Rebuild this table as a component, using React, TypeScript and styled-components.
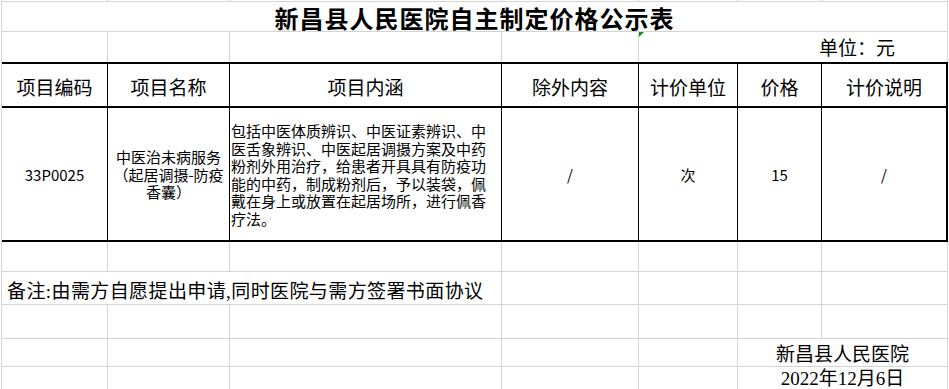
import styled, { createGlobalStyle } from "styled-components";

const GlobalStyle = createGlobalStyle`
  html, body {
    margin: 0;
    padding: 0;
    background: #fff;
  }
  body {
    font-family: "Noto Sans CJK SC", sans-serif;
    color: #000;
  }
`;

// column widths taken from the sheet (each includes its right grid line)
const COLS = "106px 122px 272px 137px 99px 84px 126px";
const GRID = "#d4d4d4";
const SERIF = `"Liberation Serif", "Noto Sans CJK SC", serif`;

const Sheet = styled.div`
  width: 946px;
  margin-left: 1px;
  border-left: 1px solid ${GRID};
`;

const Row = styled.div<{ $h: number }>`
  display: grid;
  grid-template-columns: ${COLS};
  height: ${(p) => p.$h}px;
`;

interface CellProps {
  $span?: number;
  $noBottom?: boolean;
}

const Cell = styled.div<CellProps>`
  grid-column: span ${(p) => p.$span ?? 1};
  box-sizing: border-box;
  border-right: 1px solid ${GRID};
  border-bottom: ${(p) => (p.$noBottom ? "none" : `1px solid ${GRID}`)};
  display: flex;
  align-items: center;
  position: relative;
  min-width: 0;
  white-space: nowrap;
`;

const TitleCell = styled(Cell)`
  justify-content: center;
  align-items: flex-end;
  padding-bottom: 1px;
  font-size: 24px;
  line-height: 24px;
  font-weight: 700;
  letter-spacing: 1px;
`;

const UnitCell = styled(Cell)`
  justify-content: flex-end;
  align-items: flex-end;
  padding: 0 52px 3px 0;
  font-family: ${SERIF};
  font-size: 19px;
  line-height: 20px;

  /* excel error marker */
  &::before {
    content: "";
    position: absolute;
    top: 0;
    left: 0;
    width: 0;
    height: 0;
    border-top: 5px solid #1b8a1b;
    border-right: 5px solid transparent;
  }
`;

const Table = styled.div`
  border-top: 2px solid #000;
`;

const TRow = styled.div<{ $h: number }>`
  display: grid;
  grid-template-columns: ${COLS};
  height: ${(p) => p.$h}px;
  box-sizing: border-box;
  border-bottom: 2px solid #000;
`;

const TCell = styled.div<{ $left?: boolean }>`
  box-sizing: border-box;
  border-right: 1px solid #000;
  display: flex;
  align-items: center;
  justify-content: ${(p) => (p.$left ? "flex-start" : "center")};
  text-align: ${(p) => (p.$left ? "left" : "center")};
  padding-left: ${(p) => (p.$left ? "1px" : "0")};
  white-space: nowrap;

  &:last-child {
    border-right-width: 2px;
  }
`;

const HeadCell = styled(TCell)`
  font-size: 19px;
  padding-top: 2px;
`;

const DataCell = styled(TCell)`
  font-size: 15px;
  line-height: 17.5px;
  padding-top: 1px;
`;

const NoteCell = styled(Cell)`
  padding: 2px 0 0 5px;
  font-family: ${SERIF};
  font-size: 19px;
  letter-spacing: 0.4px;
`;

const SignCell = styled(Cell)`
  justify-content: center;
  font-family: ${SERIF};
  font-size: 19px;
`;

const headers = ["项目编码", "项目名称", "项目内涵", "除外内容", "计价单位", "价格", "计价说明"];

const content = [
  "包括中医体质辨识、中医证素辨识、中",
  "医舌象辨识、中医起居调摄方案及中药",
  "粉剂外用治疗，给患者开具具有防疫功",
  "能的中药，制成粉剂后，予以装袋，佩",
  "戴在身上或放置在起居场所，进行佩香",
  "疗法。",
];

const name = ["中医治未病服务", "（起居调摄-防疫", "香囊）"];

function Blank({ n }: { n: number }) {
  return (
    <>
      {Array.from({ length: n }).map((_, i) => (
        <Cell key={i} />
      ))}
    </>
  );
}

function Lines({ lines }: { lines: string[] }) {
  return (
    <div>
      {lines.map((l) => (
        <div key={l}>{l}</div>
      ))}
    </div>
  );
}

export default function App() {
  return (
    <>
      <GlobalStyle />
      <Sheet>
        <Row $h={2}>
          <Blank n={7} />
        </Row>
        <Row $h={30}>
          <TitleCell $span={7}>新昌县人民医院自主制定价格公示表</TitleCell>
        </Row>
        <Row $h={30}>
          <Cell $noBottom />
          <Cell $noBottom />
          <Cell $noBottom />
          <Cell $noBottom />
          <UnitCell $span={3} $noBottom>
            单位：元
          </UnitCell>
        </Row>

        <Table>
          <TRow $h={44}>
            {headers.map((h) => (
              <HeadCell key={h}>{h}</HeadCell>
            ))}
          </TRow>
          <TRow $h={134}>
            <DataCell>33P0025</DataCell>
            <DataCell>
              <Lines lines={name} />
            </DataCell>
            <DataCell $left>
              <Lines lines={content} />
            </DataCell>
            <DataCell>/</DataCell>
            <DataCell>次</DataCell>
            <DataCell>15</DataCell>
            <DataCell>/</DataCell>
          </TRow>
        </Table>

        <Row $h={30}>
          <Blank n={7} />
        </Row>
        <Row $h={33}>
          <NoteCell $span={3}>备注:由需方自愿提出申请,同时医院与需方签署书面协议</NoteCell>
          <Blank n={4} />
        </Row>
        <Row $h={34}>
          <Blank n={7} />
        </Row>
        <Row $h={24}>
          <Blank n={5} />
          <SignCell $span={2}>新昌县人民医院</SignCell>
        </Row>
        <Row $h={25}>
          <Blank n={5} />
          <SignCell $span={2}>2022年12月6日</SignCell>
        </Row>
        <Row $h={20}>
          <Blank n={7} />
        </Row>
      </Sheet>
    </>
  );
}
